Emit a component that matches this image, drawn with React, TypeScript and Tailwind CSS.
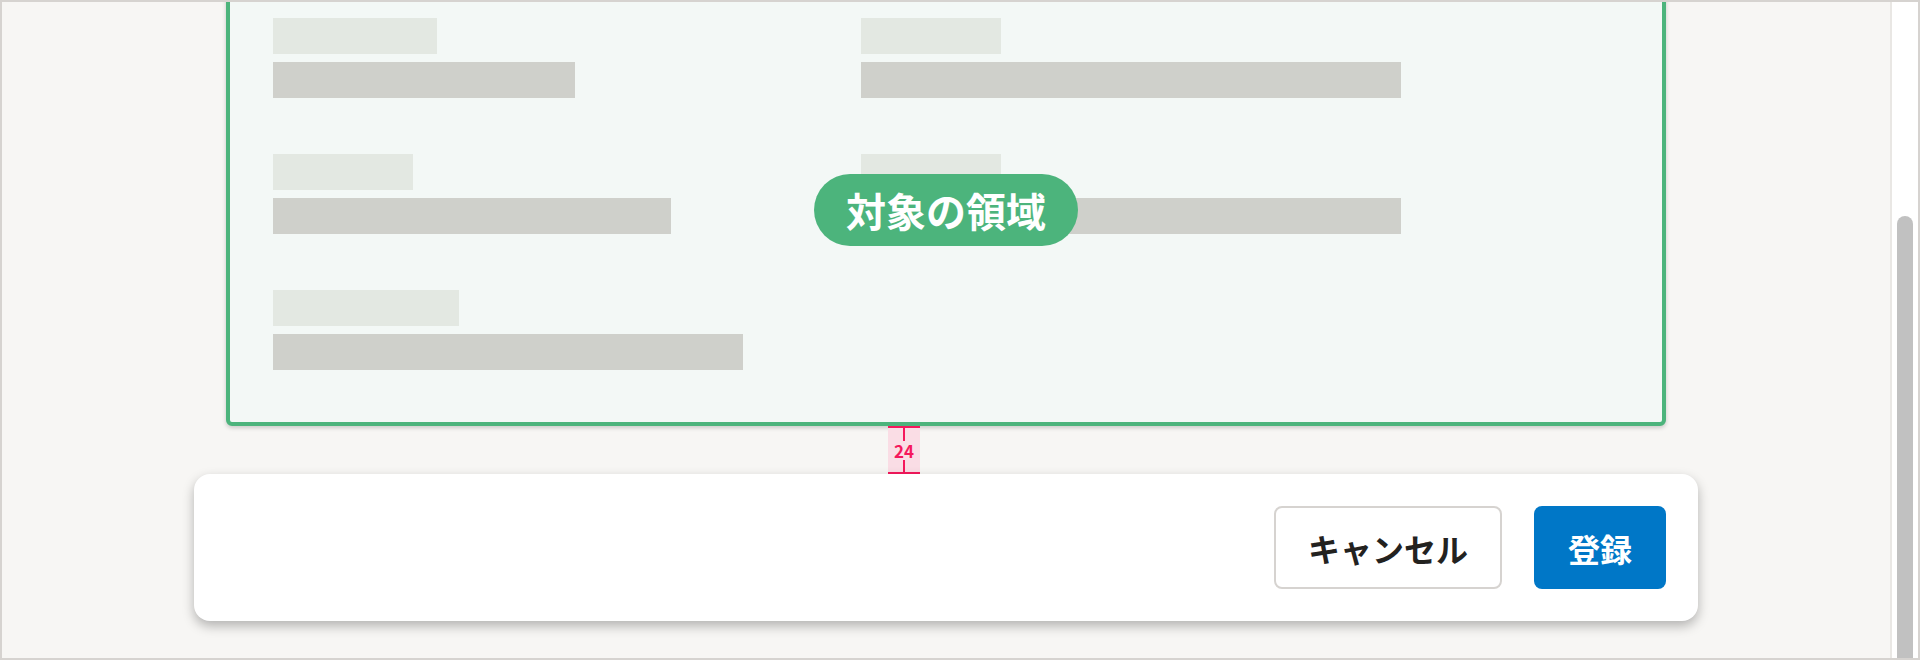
import React from "react";

const left = [
  { label: 164, bar: 302 },
  { label: 140, bar: 398 },
  { label: 186, bar: 470 },
];
const right = [
  { label: 140, bar: 540 },
  { label: 140, bar: 540 },
];

function Field({ label, bar }: { label: number; bar: number }) {
  return (
    <div className="flex flex-col gap-2">
      <div className="h-9 bg-[#e3e8e2]" style={{ width: label }} />
      <div className="h-9 bg-[#cfd0cb]" style={{ width: bar }} />
    </div>
  );
}

function Spacing() {
  // 余白の注釈
  return (
    <div className="flex h-12 w-8 flex-col items-center bg-[#fadde5]">
      <div className="h-[2px] w-full bg-[#f5185c]" />
      <div className="w-[2px] flex-1 bg-[#f5185c]" />
      <span className="py-[1px] text-[17px] font-bold leading-none text-[#f5185c]">24</span>
      <div className="w-[2px] flex-1 bg-[#f5185c]" />
      <div className="h-[2px] w-full bg-[#f5185c]" />
    </div>
  );
}

export default function App() {
  return (
    <div className="flex h-[660px] w-full overflow-hidden border-2 border-[#d6d3d0] font-['Noto_Sans_CJK_JP','Noto_Sans',sans-serif]">
      <main className="relative flex flex-1 flex-col overflow-hidden bg-[#f7f6f4]">
        <section className="mx-auto -mt-[40px] w-[1440px] rounded-md border-4 border-[#4cb47c] bg-[#f3f8f6] py-[52px] pl-[43px] shadow-[0_2px_4px_rgba(0,0,0,0.18)]">
          <div className="grid grid-cols-[588px_1fr] gap-y-14">
            <Field {...left[0]} />
            <Field {...right[0]} />
            <Field {...left[1]} />
            <Field {...right[1]} />
            <Field {...left[2]} />
          </div>
        </section>

        <div className="mx-auto flex h-12 w-[1440px]">
          <div className="ml-[662px]">
            <Spacing />
          </div>
        </div>

        <footer className="mx-auto flex w-[1504px] justify-end gap-8 rounded-2xl bg-white p-8 shadow-[0_5px_12px_rgba(0,0,0,0.28)]">
          <button className="flex h-[83px] items-center rounded-lg border-2 border-[#d6d3d0] bg-white px-8 text-[32px] font-bold text-[#23221f]">
            キャンセル
          </button>
          <button className="flex h-[83px] items-center rounded-lg border-2 border-transparent bg-[#0077c7] px-8 text-[32px] font-bold text-white">
            登録
          </button>
        </footer>

        <div className="absolute left-1/2 top-[172px] flex h-[72px] -translate-x-1/2 items-center rounded-full bg-[#4cb47c] px-8 text-[40px] font-bold text-white">
          対象の領域
        </div>
      </main>
      <div className="w-[2px] bg-[#e9e7e4]" />
      <div className="relative w-[26px] bg-white">
        <div className="absolute bottom-0 left-[5px] top-[214px] w-4 rounded-t-full bg-[#c1c1c1]" />
      </div>
    </div>
  );
}
